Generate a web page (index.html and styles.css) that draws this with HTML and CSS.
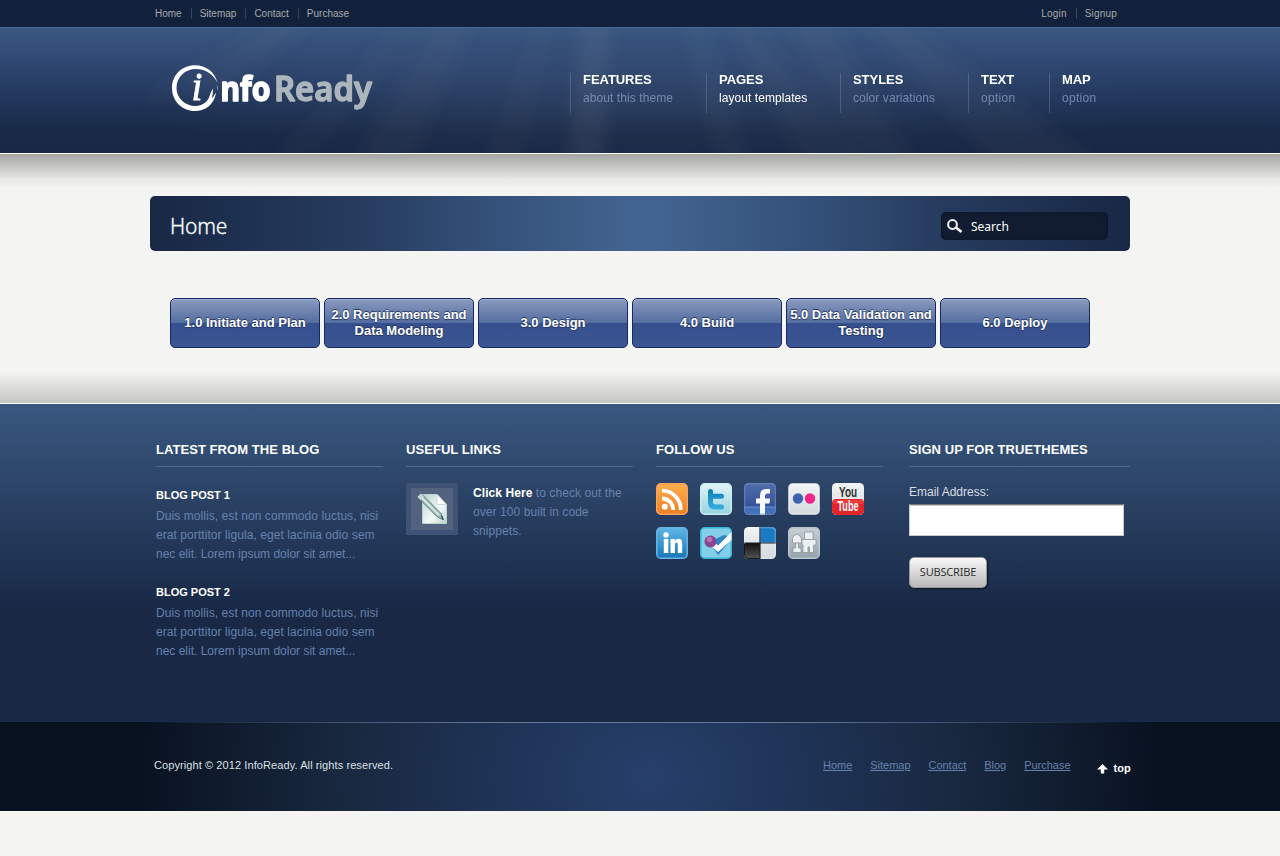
FILE: index.html
```html
<!DOCTYPE html>
<html lang="en">
<head>
<meta charset="utf-8">
<title>InfoReady</title>
<link rel="stylesheet" href="styles.css">
</head>
<body>
<div class="topbar"><div class="wrap topbar-in">
  <ul class="toplinks"><li>Home</li><li>Sitemap</li><li>Contact</li><li>Purchase</li></ul>
  <ul class="toplinks account"><li>Login</li><li>Signup</li></ul>
</div></div>

<header class="header">
  <svg class="rays" width="1280" height="125" viewBox="0 28 1280 125">
    <defs><filter id="soft" x="-30%" y="-30%" width="160%" height="160%"><feGaussianBlur stdDeviation="8"/></filter>
    <radialGradient id="glow" cx=".5" cy=".6" r=".5"><stop offset="0" stop-color="#fff" stop-opacity=".05"/><stop offset="1" stop-color="#fff" stop-opacity="0"/></radialGradient></defs>
    <rect x="120" y="28" width="1040" height="125" fill="url(#glow)"/>
    <g fill="#cfd8d8" filter="url(#soft)">
      <path opacity=".07" d="M583 10H610L604 170H566Z"/>
      <path opacity=".035" d="M680 10H702L752 170H718Z"/>
      <path opacity=".04" d="M720 10H745L870 170H805Z"/>
      <path opacity=".04" d="M780 10H825L920 170H860Z"/>
      <path opacity=".04" d="M850 10H890L1110 170H1000Z"/>
      <path opacity=".025" d="M540 10H555L520 170H480Z"/>
      <path opacity=".04" d="M440 10H480L410 170H350Z"/>
      <path opacity=".04" d="M290 10H330L220 100H140Z"/>
      <path opacity=".025" d="M410 10H440L300 170H260Z"/>
    </g>
  </svg>
  <div class="wrap header-in">
    <svg class="logo" width="210" height="56" viewBox="168 60 210 56">
      <path fill="#fff" fill-rule="evenodd" d="M217.500 83C215 72 206 65.200 195 65.200C182 65.200 172 75 172 88C172 101 182 111 195 111C206 111 214 104 216 93L214.500 94.500Q213.500 97 212 98Q213 93 213 88.500L210.500 93C209 101 203 106 195.500 106C185 106 176.500 98 176.500 88C176.500 77 185 69 196 69C206 69 214 75 217.500 83ZM216.800 84L218 91L217 88Z"/>
      <text class="logo-i" x="191.500" y="100">i</text>
      <text class="logo-a" x="220.500" y="100.500" textLength="50" lengthAdjust="spacingAndGlyphs">nfo</text>
      <text class="logo-b" x="274" y="100.500" textLength="98" lengthAdjust="spacingAndGlyphs">Ready</text>
    </svg>
    <ul class="nav">
      <li><b>FEATURES</b><span>about this theme</span></li>
      <li class="on"><b>PAGES</b><span>layout templates</span></li>
      <li><b>STYLES</b><span>color variations</span></li>
      <li><b>TEXT</b><span class="opt">option</span></li>
      <li><b>MAP</b><span class="opt">option</span></li>
    </ul>
  </div>
</header>

<main class="main">
  <div class="band">
    <h1>Home</h1>
    <div class="search">
      <svg width="16" height="15" viewBox="0 0 16 15" fill="none" stroke="#f4f4f4"><circle cx="5.500" cy="5.500" r="4.400" stroke-width="2"/><path d="M9 8.500L14.500 13" stroke-width="2.600"/></svg>
      <span>Search</span>
    </div>
  </div>
  <div class="steps">
    <a>1.0 Initiate and Plan</a><a>2.0 Requirements and Data Modeling</a><a>3.0 Design</a><a>4.0 Build</a><a class="tight">5.0 Data Validation and Testing</a><a>6.0 Deploy</a>
  </div>
</main>

<footer class="footer">
  <div class="cols">
    <section><h2>LATEST FROM THE BLOG</h2>
      <h3>BLOG POST 1</h3>
      <p>Duis mollis, est non commodo luctus, nisi<br>erat porttitor ligula, eget lacinia odio sem<br><span class="last">nec elit. Lorem ipsum dolor sit amet...</span></p>
      <h3>BLOG POST 2</h3>
      <p>Duis mollis, est non commodo luctus, nisi<br>erat porttitor ligula, eget lacinia odio sem<br><span class="last">nec elit. Lorem ipsum dolor sit amet...</span></p>
    </section>
    <section><h2>USEFUL LINKS</h2>
      <div class="link">
        <div class="thumb"><svg width="42" height="42" viewBox="0 0 42 42">
          <defs><linearGradient id="pg" x1="0" y1="0" x2="1" y2="1"><stop offset="0" stop-color="#b9d2d3"/><stop offset=".6" stop-color="#f4f9f7"/><stop offset="1" stop-color="#bcd3cd"/></linearGradient></defs>
          <path d="M11.500 6.500H26L35.500 16.500V35.500H11.500Z" fill="url(#pg)" stroke="#b9d5cf"/><path d="M26 6.500V16.500H35.500Z" fill="#fff" stroke="#c6dcd9"/>
          <path d="M6.500 9L10 5.500L30 25.500L32.500 32L26.500 29Z" fill="#a9c5c2" stroke="#4f7775"/><path d="M10 9L28 27" stroke="#dcebe8" stroke-width="1.500"/><path d="M29.500 28.500L32.500 32L31.500 28Z" fill="#244b4a"/><path d="M6.500 9L10 5.500L13 8.500L9.500 12Z" fill="#c8d9da"/></svg></div>
        <p><b>Click Here</b> to check out the<br>over 100 built in code<br>snippets.</p>
      </div>
    </section>
    <section><h2>FOLLOW US</h2>
      <div class="social">
        <svg viewBox="0 0 32 32"><defs>
          <linearGradient id="or" x2="0" y2="1"><stop stop-color="#fdb04e"/><stop offset="1" stop-color="#f07d22"/></linearGradient>
          <linearGradient id="tw" x2="0" y2="1"><stop stop-color="#e2f4f7"/><stop offset="1" stop-color="#95d3de"/></linearGradient>
          <linearGradient id="tb" gradientUnits="userSpaceOnUse" x1="0" y1="6" x2="0" y2="26"><stop stop-color="#0d7eb4"/><stop offset="1" stop-color="#35aee4"/></linearGradient>
          <linearGradient id="fb" x2="0" y2="1"><stop stop-color="#526ead"/><stop offset="1" stop-color="#2b4590"/></linearGradient>
          <linearGradient id="gr" x2="0" y2="1"><stop stop-color="#f2f4f6"/><stop offset="1" stop-color="#d3d9dd"/></linearGradient>
          <linearGradient id="li" x2="0" y2="1"><stop stop-color="#5eb7e4"/><stop offset="1" stop-color="#1a75b9"/></linearGradient>
          <linearGradient id="dg" x2="0" y2="1"><stop stop-color="#c8d0d5"/><stop offset="1" stop-color="#95a1aa"/></linearGradient>
          <linearGradient id="bk" x2="0" y2="1"><stop stop-color="#111"/><stop offset="1" stop-color="#555"/></linearGradient>
          <clipPath id="rc"><rect width="32" height="32" rx="4.500"/></clipPath></defs>
          <rect x=".75" y=".75" width="30.500" height="30.500" rx="4" fill="url(#or)" stroke="#f9a45d" stroke-width="1.500"/>
          <g fill="none" stroke="#fff" stroke-width="3.800"><path d="M6 7.700A18.800 18.800 0 0 1 24.800 27"/><path d="M6 15.500A11.200 11.200 0 0 1 17.200 27"/></g><circle cx="8.800" cy="23.700" r="3" fill="#fff"/></svg>
        <svg viewBox="0 0 32 32"><rect x=".75" y=".75" width="30.500" height="30.500" rx="4" fill="url(#tw)" stroke="#c8eef2" stroke-width="1.500"/>
          <path d="M10.500 8.500V19.500Q10.500 24 15 24H21.500M10.500 13.200H21.500" fill="none" stroke="url(#tb)" stroke-width="5" stroke-linecap="round"/></svg>
        <svg viewBox="0 0 32 32"><g clip-path="url(#rc)"><rect width="32" height="32" fill="url(#fb)"/><path d="M0 24H32V32H0Z" fill="#4270b8"/><path d="M0 24H32" stroke="#7190cd"/>
          <path d="M16 32V20.500H12V15.500H16V12.500Q16 6 22.500 6H26V10.500H23.500Q21 10.500 21 13V15.500H26L25.500 20.500H21V32Z" fill="#f6f8fb"/></g><rect x=".75" y=".75" width="30.500" height="30.500" rx="4" fill="none" stroke="#6c89bf" stroke-opacity=".6" stroke-width="1.500"/></svg>
        <svg viewBox="0 0 32 32"><rect x=".75" y=".75" width="30.500" height="30.500" rx="4" fill="url(#gr)" stroke="#fff" stroke-opacity=".6" stroke-width="1.500"/><circle cx="10" cy="15.500" r="5.200" fill="#3e63ae"/><circle cx="22" cy="15.500" r="5.200" fill="#f02387"/></svg>
        <svg viewBox="0 0 32 32"><g clip-path="url(#rc)"><rect width="32" height="32" fill="url(#gr)"/><rect y="16" width="32" height="16" rx="4" fill="#e32428"/><path d="M1 17H31V21H1Z" fill="#f04b48" opacity=".6"/></g>
          <text class="yt" x="7" y="13.700" fill="#303030" textLength="18" lengthAdjust="spacingAndGlyphs">You</text><text class="yt" x="5.500" y="28" fill="#fff" textLength="21" lengthAdjust="spacingAndGlyphs">Tube</text></svg>
        <svg viewBox="0 0 32 32"><rect x=".75" y=".75" width="30.500" height="30.500" rx="4" fill="url(#li)" stroke="#64b5e4" stroke-width="1.500"/><g fill="#fff"><circle cx="10" cy="8" r="2.700"/><path d="M7.800 12H12.300V26H7.800ZM14.500 12H18.800V14Q20 11.700 22.600 11.700Q26.200 11.700 26.200 17V26H21.800V18Q21.800 15.300 20.400 15.300Q18.900 15.300 18.900 18V26H14.500Z"/></g></svg>
        <svg viewBox="0 0 32 32"><rect x=".75" y=".75" width="30.500" height="30.500" rx="4" fill="#83cfe9" stroke="#35b8d3" stroke-width="1.500"/><path d="M9 15L18 28L31 13V10L24 8Z" fill="#2d86c5"/><path d="M12 13L18 18.500L31.500 5V13L18 25L11 19Z" fill="#fff"/><circle cx="10.500" cy="14.500" r="6" fill="#8a4592"/><circle cx="9.500" cy="12.500" r="2.800" fill="#b271b1"/></svg>
        <svg viewBox="0 0 32 32"><g clip-path="url(#rc)"><rect width="32" height="32" fill="url(#gr)"/><path d="M16.500 0H32V15.500H16.500Z" fill="#197bc3"/><path d="M0 16H16V32H0Z" fill="url(#bk)"/><path d="M16 0V32M0 16H32" stroke="#17202a" stroke-width="1.200"/></g><rect x=".75" y=".75" width="30.500" height="30.500" rx="4" fill="none" stroke="#fff" stroke-opacity=".3"/><path d="M.7 17V27Q.7 31.300 5 31.300H16" fill="none" stroke="#080808"/></svg>
        <svg viewBox="0 0 32 32"><rect x=".75" y=".75" width="30.500" height="30.500" rx="4" fill="url(#dg)" stroke="#b8c5cb" stroke-width="1.500"/><g fill="#edf0f1" stroke="#8b979e" stroke-width=".8"><path d="M4.500 16V11Q6 7 9 7.500Q13 8 13.500 13V16Z"/><path d="M7.500 16H10.500V21H13V25.500H5V21H7.500Z"/><path d="M14 12.500H28V18H25.500V25.500H21.500V20H20V25.500H15V18H14Z"/><path d="M16.500 5H25V12.500H16.500Z"/></g></svg>
      </div>
    </section>
    <section><h2>SIGN UP FOR TRUETHEMES</h2>
      <label class="label">Email Address:</label>
      <input class="email" type="text">
      <button class="button">SUBSCRIBE</button>
    </section>
  </div>
</footer>
<div class="bottom"><div class="bottom-in">
  <span class="copy">Copyright © 2012 InfoReady. All rights reserved.</span>
  <nav class="flinks"><a>Home</a><a>Sitemap</a><a>Contact</a><a>Blog</a><a>Purchase</a></nav>
  <div class="top"><svg width="11" height="10" viewBox="0 0 11 10"><path d="M5.500 0L11 5.500H7.200V9.500H3.800V5.500H0Z" fill="#fff"/></svg><b>top</b></div>
</div></div>
</body>
</html>
```
FILE: styles.css
```css
* { box-sizing: border-box; margin: 0; padding: 0; }
body { background: #f4f4f2; font: 12px/19px "Liberation Sans", Arial, sans-serif; color: #fff; height: 856px; overflow: hidden; }
ul { list-style: none; }
.wrap { width: 980px; margin: 0 auto; }
.topbar { height: 28px; background: #12213b; border-bottom: 1px solid #476c9c; }
.topbar-in { display: flex; justify-content: space-between; padding: 8px 13px 0 5px; }
.toplinks { display: flex; font-size: 10px; line-height: 11px; color: #a7a9ab; }
.toplinks li { padding-right: 9px; }
.toplinks li + li { border-left: 1px solid #35435b; padding-left: 8px; }
.toplinks li:last-child { padding-right: 0; }
.account { letter-spacing: .2px; }
.header { position: relative; height: 126px; border-bottom: 1px solid #fff; background: linear-gradient(#39577f 0, #2f4871 36px, #22375c 70px, #192947 105px, #192846 125px); }
.rays { position: absolute; left: 0; top: 0; }
.header-in { position: relative; display: flex; padding: 32px 0 0 18px; }
.logo { flex: none; display: block; }
.logo-i { font: italic 39px "Liberation Serif", serif; fill: #fff; stroke: #fff; stroke-width: .8; }
.logo-a, .logo-b { font: bold 34px "Noto Sans", sans-serif; fill: #fff; stroke: #fff; stroke-width: 1.600; stroke-linejoin: round; }
.logo-b { fill: #adb6bd; stroke: #adb6bd; font-weight: 600; stroke-width: 1.400; }
.nav { margin: 13px 0 0 192px; display: grid; grid-template-columns: 136px 134px 128px 81px 72px; height: 40px; }
.nav li { border-left: 1px solid rgba(151,164,190,.3); padding-left: 12px; white-space: nowrap; }
.nav b { display: block; font-size: 13px; line-height: 14px; letter-spacing: -.05px; }
.nav span { display: block; margin-top: 2px; color: #7689b1; letter-spacing: .08px; }
.nav .on span { color: #fff; letter-spacing: .06px; }
.nav .opt { letter-spacing: .3px; }
.main { height: 250px; padding-top: 42px; border-bottom: 1px solid #fff; background: linear-gradient(#a5a5a4, #c4c4c3 12px, #e8e8e6 25px, #f4f4f2 34px) top/100% 35px no-repeat, linear-gradient(#f4f4f2, #c5c5c4) bottom/100% 32px no-repeat, #f4f4f2; }
.band { width: 980px; height: 55px; margin: 0 auto; border-radius: 5px; display: flex; justify-content: space-between; align-items: center; padding: 4px 22px 0 20px; background: linear-gradient(90deg, #182845, #273c60 22%, #314d74 32%, #426490 49%, #426490 52%, #314d74 70%, #273c60 80%, #182845); }
.band h1 { font: 300 21px/30px "Noto Sans", "Open Sans", sans-serif; letter-spacing: -.2px; color: #fff; -webkit-text-stroke: .3px #fff; padding-top: 1px; }
.search { width: 167px; height: 28px; display: flex; align-items: center; border-radius: 5px; background: #111c31; box-shadow: inset 0 0 4px #0a1425; padding: 2px 0 0 6px; font: 12px/18px "Noto Sans", sans-serif; }
.search span { margin-left: 8px; }
.steps { display: flex; gap: 4px; width: 940px; margin: 47px 0 0 170px; }
.steps a { width: 150px; height: 50px; display: flex; align-items: center; justify-content: center; text-align: center; padding: 0 2px; border: 1px solid #182a65; border-radius: 5px; font: bold 13px/16px "Liberation Sans", sans-serif; text-shadow: 0 -1px 1px #24345f, 0 1px 1px #24345f; background: linear-gradient(#8a9abf, #546da0 50%, #36508f 50%, #3b5492); box-shadow: inset 0 1px 0 #9fadd0; }
.steps .tight { padding: 0; }
.footer { height: 318px; background: linear-gradient(#39577f, #182845 208px); }
.cols { display: grid; grid-template-columns: 227px 227px 227px 221px; column-gap: 23px; margin-left: 156px; width: 977px; padding-top: 37px; }
.cols section:last-child { margin-left: 3px; width: 221px; }
.cols h2 { font-size: 13px; line-height: 18px; height: 26px; border-bottom: 1px solid #50688b; white-space: nowrap; letter-spacing: .06px; }
.cols h3 { font-size: 11px; line-height: 14px; margin-top: 21px; }
.cols p { color: #6682ad; white-space: nowrap; letter-spacing: .07px; }
.cols .last { letter-spacing: 0; }
.cols h3 + p { margin-top: 5px; }
.cols p + h3 { margin-top: 21px; }
.link { display: flex; margin-top: 16px; }
.link p { margin: 1px 0 0 15px; }
.link b { color: #fff; }
.thumb { width: 52px; height: 52px; padding: 5px; background: #3e5275; flex: none; }
.thumb svg { display: block; background: #52627f; }
.social { display: grid; grid-template-columns: repeat(5, 32px); gap: 12px; margin-top: 16px; }
.social svg { width: 32px; height: 32px; display: block; overflow: visible; }
.yt { font: bold 14px "Liberation Sans", sans-serif; }
.label { display: block; margin-top: 16px; color: #d9dee5; }
.email { display: block; margin-top: 2px; width: 215px; height: 32px; border: 1px solid #c9c9c9; border-top: 1px solid #777; background: #fff; box-shadow: inset 0 1px 0 #ccc; border-radius: 0; }
.button { display: block; margin-top: 21px; width: 78px; height: 31px; padding-bottom: 1px; border: 1px solid #999; border-radius: 5px; background: linear-gradient(#f8f8f8, #b9b9b9); box-shadow: 1px 1px 2px #0b1424; font: 11px/20px "Noto Sans", sans-serif; letter-spacing: -.2px; color: #333; }
.bottom { height: 89px; background: linear-gradient(90deg, transparent 150px, #66789a 500px, #66789a 780px, transparent 1130px) top/100% 1px no-repeat, radial-gradient(ellipse 515px 400px at 650px 55px, #27406a, #20355a 25%, #18283f 60%, #101c2e 82%, #081120); }
.bottom-in { display: flex; padding: 35px 0 0 154px; font-size: 11px; line-height: 17px; }
.copy { width: 669px; color: #dde0e4; letter-spacing: .09px; }
.flinks { display: flex; gap: 18px; color: #6681ad; letter-spacing: -.02px; }
.flinks a { text-decoration: underline; }
.top { display: flex; align-items: center; gap: 6px; margin: 3px 0 0 26px; }
```
